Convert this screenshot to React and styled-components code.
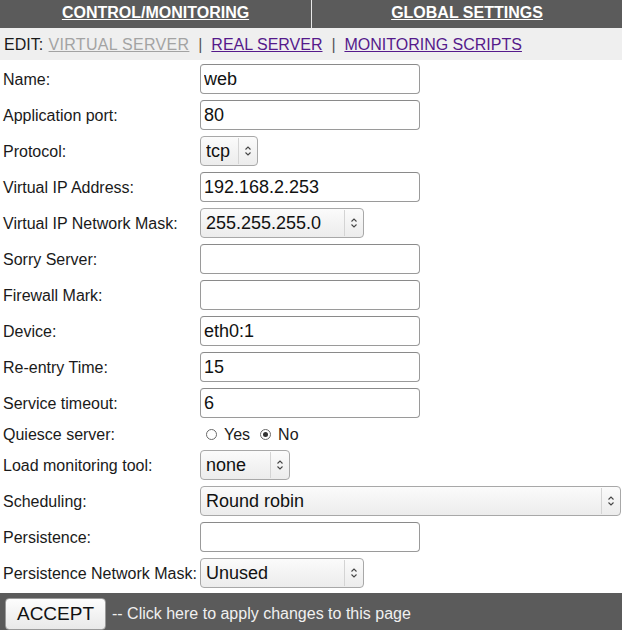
import React from "react";
import styled, { createGlobalStyle } from "styled-components";

const Global = createGlobalStyle`
  html, body { margin: 0; padding: 0; background: #ffffff; }
  body { font-family: "Liberation Sans", Arial, sans-serif; font-size: 16px; color: #1a1a1a; }
`;

const Page = styled.div`
  width: 622px;
  display: flex;
  flex-direction: column;
`;

const TopBar = styled.div`
  display: grid;
  grid-template-columns: 311px 1fr;
  background: #5b5b5b;
  height: 28px;
`;

const TopCell = styled.div`
  display: flex;
  justify-content: center;
  padding-top: 4px;
  line-height: 18px;
  border-left: ${(p) => (p.$divider ? "1px solid #e8e8e8" : "none")};
`;

const TopLink = styled.a`
  color: #ffffff;
  font-weight: bold;
  font-size: 16px;
  text-decoration: underline;
`;

const EditBar = styled.div`
  background: #efefef;
  padding: 8px 4px 6px 4px;
  line-height: 18px;
  font-size: 16px;
  display: flex;
  align-items: center;
  white-space: pre;
`;

const NavLink = styled.a`
  color: ${(p) => (p.$current ? "#a3a3a3" : "#551a8b")};
  text-decoration: underline;
  letter-spacing: ${(p) => (p.$current ? "0.3px" : "0")};
`;

const Sep = styled.span`
  color: #555;
`;

const EditLabel = styled.span`
  margin-right: 1px;
`;

const Form = styled.div`
  display: grid;
  grid-template-columns: 200px 1fr;
  padding-top: 1px;
`;

const Label = styled.div`
  height: ${(p) => p.$h || 36}px;
  display: flex;
  align-items: center;
  padding-left: 3px;
  padding-top: 1px;
  box-sizing: border-box;
  font-size: 16px;
  color: #1a1a1a;
  white-space: nowrap;
`;

const Cell = styled.div`
  height: ${(p) => p.$h || 36}px;
  display: flex;
  align-items: center;
`;

const TextInput = styled.input`
  box-sizing: border-box;
  width: 220px;
  height: 30px;
  border: 1px solid #9a9a9a;
  border-top-color: #8a8a8a;
  border-radius: 4px;
  padding: 0 3px;
  font-family: "Liberation Sans", Arial, sans-serif;
  font-size: 18px;
  color: #111;
  background: #fff;
  outline: none;
`;

const SelectWrap = styled.div`
  position: relative;
  width: ${(p) => p.$w}px;
  height: 30px;
`;

const NativeSelect = styled.select`
  appearance: none;
  -webkit-appearance: none;
  box-sizing: border-box;
  width: 100%;
  height: 30px;
  border: 1px solid #a8a8a8;
  border-radius: 4px;
  padding: 0 22px 0 5px;
  font-family: "Liberation Sans", Arial, sans-serif;
  font-size: 18px;
  color: #111;
  background: linear-gradient(#fbfbfb, #ececec);
  outline: none;
`;

const ArrowBox = styled.div`
  position: absolute;
  top: 2px;
  bottom: 2px;
  right: 1px;
  width: 18px;
  border-left: 1px solid #d4d4d4;
  display: flex;
  align-items: center;
  justify-content: center;
  pointer-events: none;
`;

const RadioGroup = styled.div`
  display: flex;
  align-items: center;
  font-size: 16px;
  padding-left: 6px;
  padding-top: 1px;
`;

const Radio = styled.input`
  appearance: none;
  -webkit-appearance: none;
  width: 11px;
  height: 11px;
  margin: 0 7px 0 0;
  border: 1px solid #6a6a6a;
  border-radius: 50%;
  background: #fff;
  box-sizing: border-box;
  display: grid;
  place-items: center;
  &:checked::after {
    content: "";
    width: 5px;
    height: 5px;
    border-radius: 50%;
    background: #333;
  }
`;

const RadioText = styled.span`
  margin-right: 10px;
`;

const Footer = styled.div`
  margin-top: 2px;
  background: #5b5b5b;
  padding: 5px 5px 6px 5px;
  display: flex;
  align-items: center;
  gap: 6px;
`;

const AcceptButton = styled.button`
  box-sizing: border-box;
  height: 32px;
  width: 101px;
  border: 1px solid #9a9a9a;
  border-radius: 4px;
  background: linear-gradient(#fdfdfd, #e9e9e9);
  font-family: "Liberation Sans", Arial, sans-serif;
  font-size: 19px;
  color: #111;
  padding: 0;
`;

const FooterText = styled.span`
  color: #f0f0f0;
  font-size: 16px;
`;

function Arrows() {
  return (
    <svg width="8" height="12" viewBox="0 0 8 12">
      <path d="M1.5 4.5 L4 2 L6.5 4.5 M1.5 7.5 L4 10 L6.5 7.5" fill="none" stroke="#444" strokeWidth="1.1" />
    </svg>
  );
}

function Select({ width, value, options }) {
  return (
    <SelectWrap $w={width}>
      <NativeSelect defaultValue={value}>
        {options.map((o) => (
          <option key={o}>{o}</option>
        ))}
      </NativeSelect>
      <ArrowBox>
        <Arrows />
      </ArrowBox>
    </SelectWrap>
  );
}

const rows = [
  { label: "Name:", input: "web" },
  { label: "Application port:", input: "80" },
  { label: "Protocol:", select: { width: 58, value: "tcp", options: ["tcp", "udp"] } },
  { label: "Virtual IP Address:", input: "192.168.2.253" },
  { label: "Virtual IP Network Mask:", select: { width: 164, value: "255.255.255.0", options: ["255.255.255.0", "255.255.0.0"] } },
  { label: "Sorry Server:", input: "" },
  { label: "Firewall Mark:", input: "" },
  { label: "Device:", input: "eth0:1" },
  { label: "Re-entry Time:", input: "15" },
  { label: "Service timeout:", input: "6" },
  { label: "Quiesce server:", radio: true, h: 26 },
  { label: "Load monitoring tool:", select: { width: 90, value: "none", options: ["none", "rup", "ruptime"] } },
  { label: "Scheduling:", select: { width: 421, value: "Round robin", options: ["Round robin", "Weighted round robin"] } },
  { label: "Persistence:", input: "" },
  { label: "Persistence Network Mask:", select: { width: 164, value: "Unused", options: ["Unused", "255.255.255.0"] } },
];

export default function App() {
  return (
    <Page>
      <Global />
      <TopBar>
        <TopCell>
          <TopLink href="#">CONTROL/MONITORING</TopLink>
        </TopCell>
        <TopCell $divider>
          <TopLink href="#">GLOBAL SETTINGS</TopLink>
        </TopCell>
      </TopBar>
      <EditBar>
        <EditLabel>EDIT: </EditLabel>
        <NavLink $current href="#">VIRTUAL SERVER</NavLink>
        <Sep>  |  </Sep>
        <NavLink href="#">REAL SERVER</NavLink>
        <Sep>  |  </Sep>
        <NavLink href="#">MONITORING SCRIPTS</NavLink>
      </EditBar>
      <Form>
        {rows.map((r) => (
          <React.Fragment key={r.label}>
            <Label $h={r.h}>{r.label}</Label>
            <Cell $h={r.h}>
              {r.input !== undefined && <TextInput defaultValue={r.input} />}
              {r.select && <Select {...r.select} />}
              {r.radio && (
                <RadioGroup>
                  <Radio type="radio" name="quiesce" />
                  <RadioText>Yes</RadioText>
                  <Radio type="radio" name="quiesce" defaultChecked />
                  <RadioText>No</RadioText>
                </RadioGroup>
              )}
            </Cell>
          </React.Fragment>
        ))}
      </Form>
      <Footer>
        <AcceptButton>ACCEPT</AcceptButton>
        <FooterText>-- Click here to apply changes to this page</FooterText>
      </Footer>
    </Page>
  );
}
